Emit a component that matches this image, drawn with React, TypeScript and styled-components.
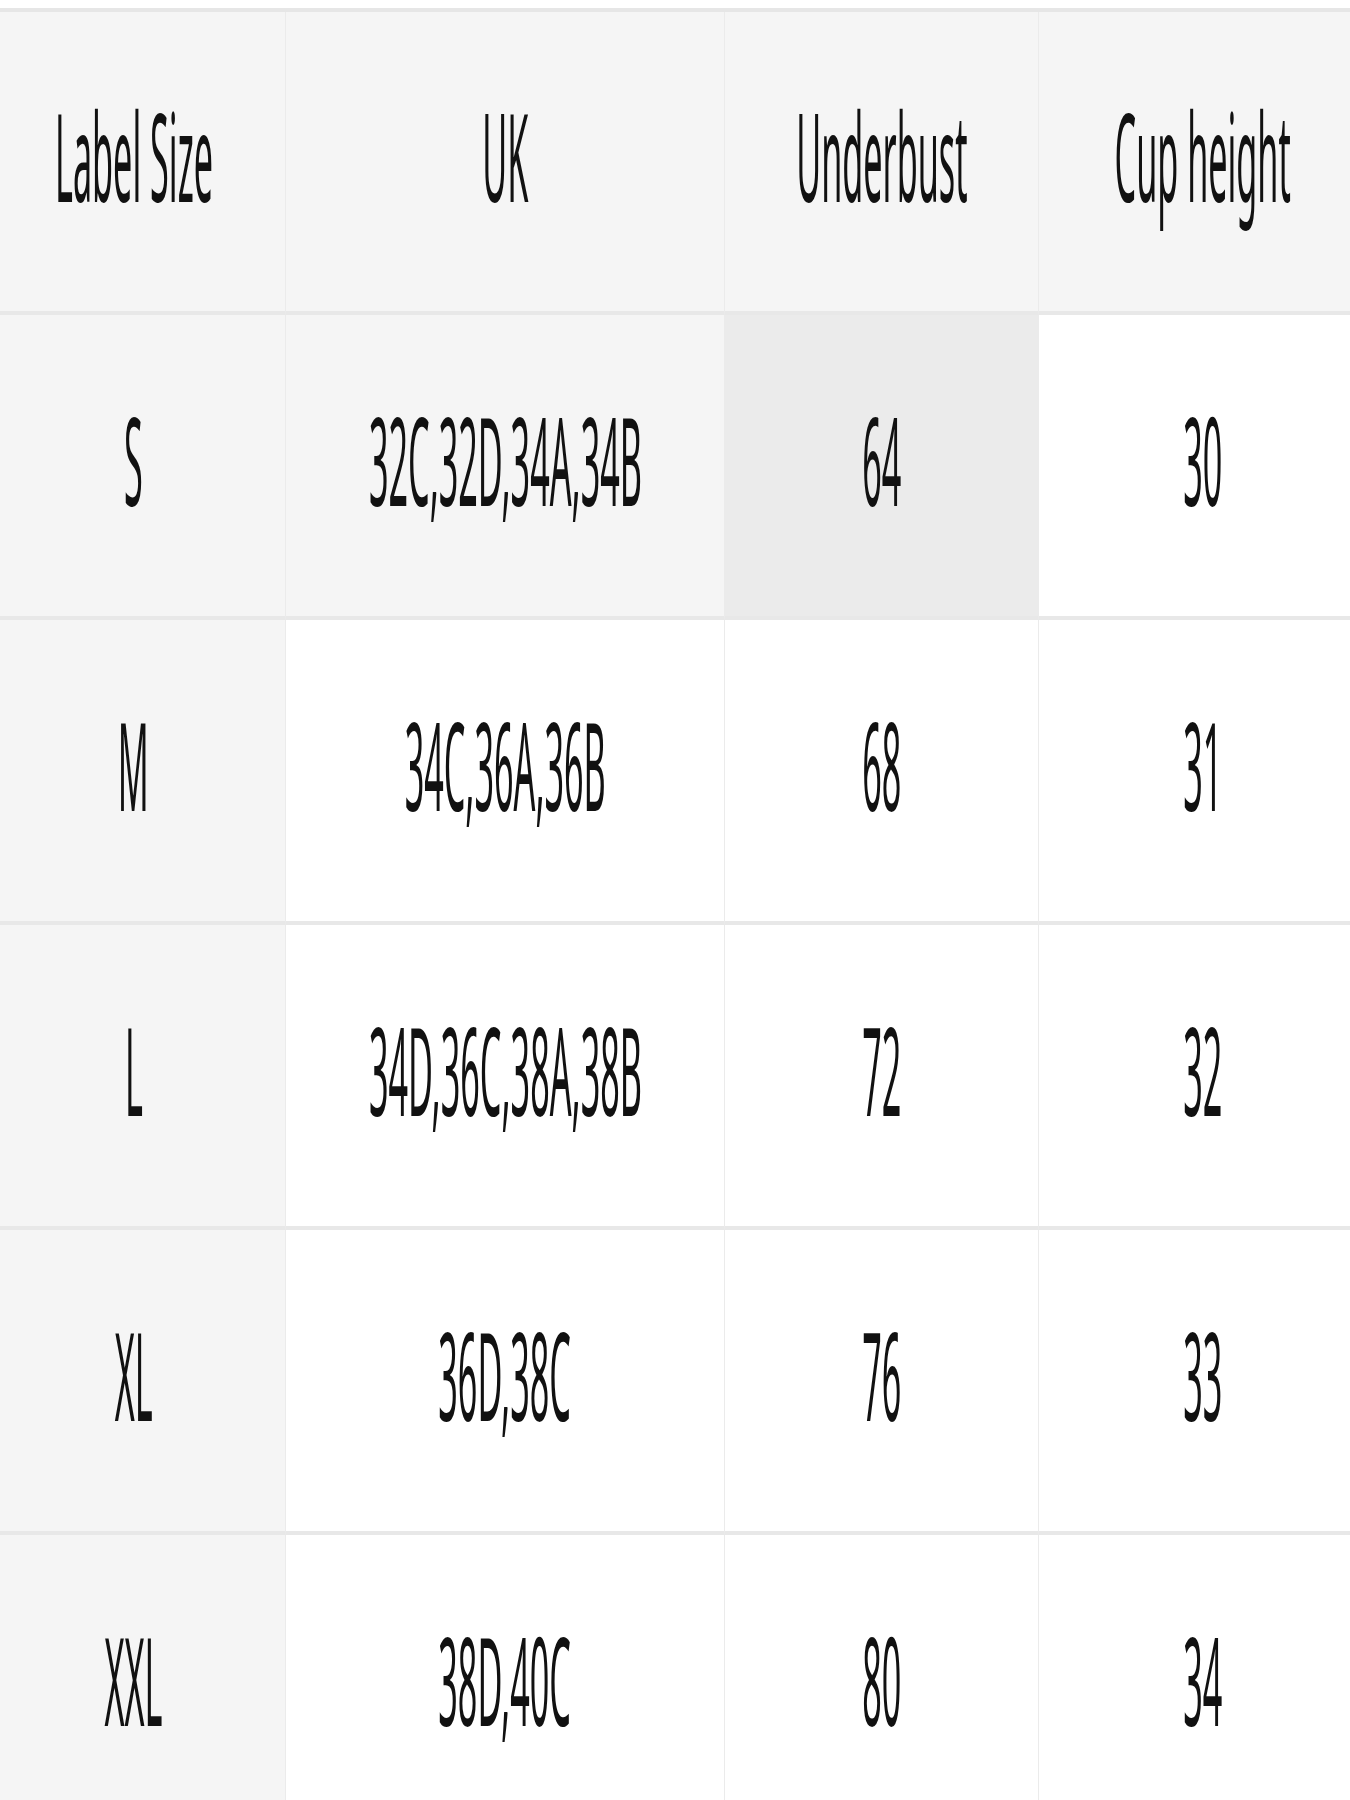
import React from 'react';
import styled, { createGlobalStyle } from 'styled-components';

const GlobalStyle = createGlobalStyle`
  html, body {
    margin: 0;
    padding: 0;
    background: #ffffff;
    overflow: hidden;
  }
  body {
    font-family: "Noto Sans", "Open Sans", sans-serif;
    color: #111111;
  }
`;

const Page = styled.div`
  width: 1350px;
  padding-top: 8px;
  overflow: hidden;
`;

const Table = styled.table`
  width: 1366px;
  border-collapse: separate;
  border-spacing: 0;
  border-top: 4px solid #e6e6e6;
  table-layout: fixed;
`;

const Cell = styled.td<{ $bg?: string; $first?: boolean; $head?: boolean }>`
  box-sizing: border-box;
  height: ${({ $head }) => ($head ? '303px' : '305px')};
  padding: 0 ${({ $first }) => ($first ? '18px' : '0')} 0 0;
  text-align: center;
  vertical-align: middle;
  font-weight: 400;
  background: ${({ $bg }) => $bg || '#ffffff'};
  border-bottom: 4px solid #e8e8e8;
  border-left: ${({ $first }) => ($first ? 'none' : '1px solid #ebebeb')};
  overflow: hidden;
`;

const Centre = styled.div`
  display: flex;
  justify-content: center;
  align-items: center;
  white-space: nowrap;
`;

const Squash = styled.span`
  flex: none;
  display: block;
  font-size: 122px;
  line-height: 1;
  transform: translateY(-7px) scaleX(0.28);
  transform-origin: center center;
`;

const columns = ['Label Size', 'UK', 'Underbust', 'Cup height'];
const widths = [285, 439, 314, 328];

const rows = [
  ['S', '32C,32D,34A,34B', '64', '30'],
  ['M', '34C,36A,36B', '68', '31'],
  ['L', '34D,36C,38A,38B', '72', '32'],
  ['XL', '36D,38C', '76', '33'],
  ['XXL', '38D,40C', '80', '34'],
];

// first row is highlighted: hovered row, hovered cell in Underbust
const cellBg = (r: number, c: number) => {
  if (c === 0) return '#f5f5f5';
  if (r === 0) {
    if (c === 2) return '#ebebeb';
    if (c === 1) return '#f5f5f5';
  }
  return '#ffffff';
};

const App: React.FC = () => {
  return (
    <Page>
      <GlobalStyle />
      <Table>
        <colgroup>
          {widths.map((w, i) => (
            <col key={i} style={{ width: w }} />
          ))}
        </colgroup>
        <thead>
          <tr>
            {columns.map((c, i) => (
              <Cell as="th" key={c} $head $first={i === 0} $bg="#f5f5f5">
                <Centre>
                  <Squash>{c}</Squash>
                </Centre>
              </Cell>
            ))}
          </tr>
        </thead>
        <tbody>
          {rows.map((row, r) => (
            <tr key={row[0]}>
              {row.map((v, c) => (
                <Cell key={c} $first={c === 0} $bg={cellBg(r, c)}>
                  <Centre>
                    <Squash>{v}</Squash>
                  </Centre>
                </Cell>
              ))}
            </tr>
          ))}
        </tbody>
      </Table>
    </Page>
  );
};

export default App;
